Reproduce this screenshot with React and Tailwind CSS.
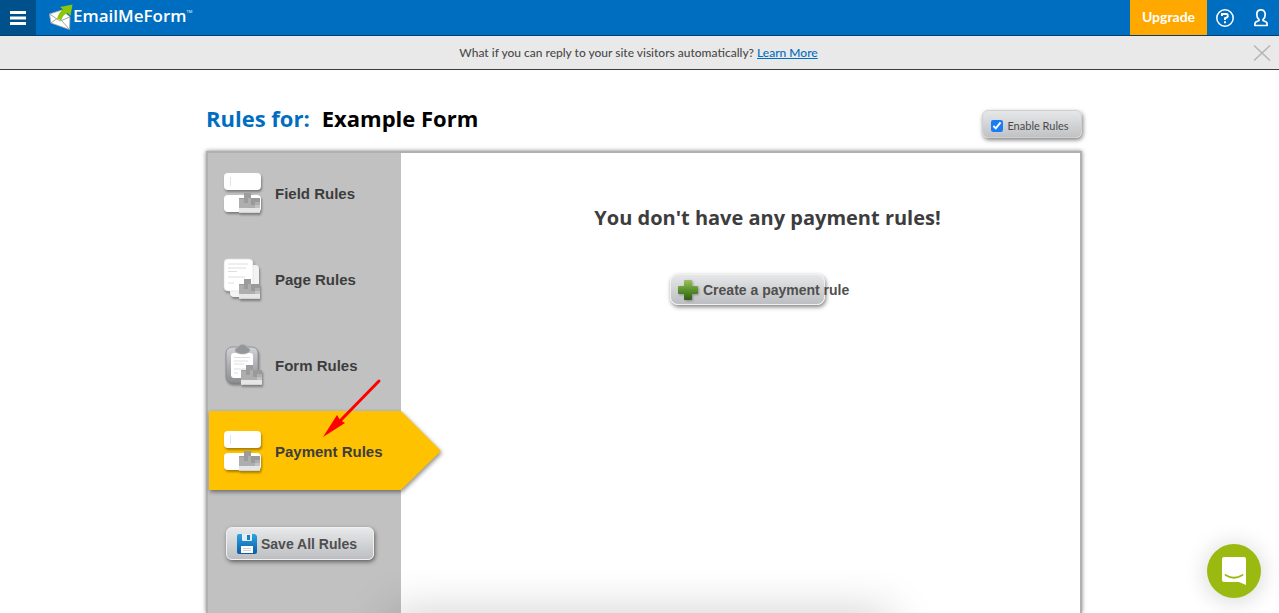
import { useState } from 'react';

const menuItems = [
  { id: 'field', label: 'Field Rules', icon: FieldIcon },
  { id: 'page', label: 'Page Rules', icon: PageIcon },
  { id: 'form', label: 'Form Rules', icon: FormIcon },
  { id: 'payment', label: 'Payment Rules', icon: FieldIcon },
];

// Little stepped block with a white tray, shared by all rule icons
function StepBadge() {
  return (
    <g>
      <path d="M17 28h5v-5h7v5h9v11H17z" fill="#aeaeae" />
      <path d="M22 23h7v5h-3v5h-4v-4h-5v-1h5z" fill="#9c9c9c" />
      <path d="M29 28h9v4h-5v3h-4z" fill="#9a9a9a" />
      <path d="M17 38h16v-3h5v8H17z" fill="#e6e6e6" />
      <path d="M33 35h5v3h-5z" fill="#c2c2c2" />
      <path d="M17 42h21v1H17z" fill="#d2d2d2" />
    </g>
  );
}

function FieldIcon() {
  return (
    <svg width="44" height="48" viewBox="0 0 44 48" className="drop-shadow-[1px_2px_1px_rgba(0,0,0,0.35)]">
      <rect x="2" y="3" width="37" height="17" rx="4" fill="#fff" />
      <path d="M8.500 7v9" stroke="#e4e4e4" />
      <rect x="2" y="25" width="37" height="17" rx="4" fill="#fff" />
      <StepBadge />
    </svg>
  );
}

function PageIcon() {
  return (
    <svg width="44" height="48" viewBox="0 0 44 48" className="drop-shadow-[1px_2px_1px_rgba(0,0,0,0.35)]">
      <rect x="8" y="9" width="29" height="32" rx="4" fill="#f3f3f3" />
      <rect x="2" y="3" width="29" height="32" rx="4" fill="#fff" stroke="#dcdcdc" strokeWidth="0.7" />
      <path d="M6 8h20M6 12h18M6 15.500h9M6 21h17M6 27h6" stroke="#dedede" />
      <StepBadge />
    </svg>
  );
}

function FormIcon() {
  return (
    <svg width="44" height="48" viewBox="0 0 44 48" className="drop-shadow-[1px_2px_1px_rgba(0,0,0,0.35)]">
      <defs>
        <linearGradient id="board" x1="0" y1="0" x2="0" y2="1">
          <stop offset="0" stopColor="#d2d3d5" />
          <stop offset="1" stopColor="#8b8d91" />
        </linearGradient>
      </defs>
      <rect x="4" y="5" width="32" height="36" rx="6" fill="url(#board)" stroke="#85878a" strokeWidth="0.8" />
      <rect x="9" y="11" width="22" height="25" rx="3" fill="#fff" />
      <path d="M12 15.500h16M12 19h14M12 22h10M12 27h12M12 31h4" stroke="#dedede" />
      <path d="M13 8c0-2 3-2 4-4s6-2 7 0 4 2 4 4-3 4-7.500 4S13 10 13 8z" fill="#94969a" stroke="#b4b6b9" strokeWidth="0.7" />
      <g transform="translate(2 0)">
        <StepBadge />
      </g>
    </svg>
  );
}

function PlusIcon() {
  return (
    <svg width="22" height="22" viewBox="0 0 22 22" className="shrink-0 drop-shadow-[1px_1px_1px_rgba(0,0,0,0.3)]">
      <defs>
        <linearGradient id="plus" x1="0" y1="0" x2="0" y2="1">
          <stop offset="0" stopColor="#9cc05f" />
          <stop offset="0.5" stopColor="#5a922c" />
          <stop offset="1" stopColor="#335c12" />
        </linearGradient>
      </defs>
      <path d="M8 1h6q1 0 1 1v5h5q1 0 1 1v6q0 1-1 1h-5v5q0 1-1 1H8q-1 0-1-1v-5H2q-1 0-1-1V8q0-1 1-1h5V2q0-1 1-1z" fill="url(#plus)" />
    </svg>
  );
}

function DiskIcon() {
  return (
    <svg width="20" height="20" viewBox="0 0 20 20" className="shrink-0">
      <defs>
        <linearGradient id="disk" x1="0" y1="0" x2="0" y2="1">
          <stop offset="0" stopColor="#2da4e0" />
          <stop offset="1" stopColor="#0a5ca8" />
        </linearGradient>
      </defs>
      <path d="M2 0h16l2 2v16q0 2-2 2H2q-2 0-2-2V2q0-2 2-2z" fill="url(#disk)" />
      <path d="M5 0h10v6q0 1-1 1H6q-1 0-1-1z" fill="#e6edf2" />
      <rect x="10" y="1" width="3" height="5" fill="#1780c4" />
      <rect x="4" y="12" width="12" height="7" fill="#fff" />
      <path d="M6 14.500h8M6 16.500h8" stroke="#d2d2d2" />
    </svg>
  );
}

function Logo() {
  return (
    <a href="#" className="ml-3 flex items-center pb-1 text-white" aria-label="EmailMeForm">
      <svg width="25" height="28" viewBox="0 0 25 28">
        <path d="M1.500 12L14 8l8 7-.500 12.500L3 21z" fill="#fff" stroke="#a9a9a9" strokeWidth="0.8" />
        <path d="M1.500 12L12 19 22 15M3 21l6-4.500M21.500 27.500L13.500 18.500" fill="none" stroke="#999" strokeWidth="0.900" />
        <path d="M9 18C9.500 13 12 9.500 15 7.500L12 5 24.500 2.500 22.500 14l-3-3c-4 2-5 3.500-6.500 8l-2-2z" fill="#8dc707" />
      </svg>
      <span className="font-['Open_Sans',sans-serif] text-[17px] font-semibold leading-6">EmailMeForm</span>
      <span className="mb-2 font-['Open_Sans',sans-serif] text-[4px] leading-none">TM</span>
    </a>
  );
}

function TopBar() {
  return (
    <header className="flex h-9 shrink-0 items-stretch border-b border-[#073d6b] bg-[#006ec0]">
      <button type="button" aria-label="Menu" className="flex w-9 items-center justify-center bg-[#00508c]">
        <svg width="16" height="14" viewBox="0 0 16 14">
          <path d="M0 1.500h16M0 7h16M0 12.500h16" stroke="#fff" strokeWidth="3" />
        </svg>
      </button>
      <Logo />
      <div className="ml-auto flex">
        <a href="#" className="flex w-[77px] items-center justify-center bg-[#ffa800] pb-0.5 font-['Lato',sans-serif] text-sm font-bold text-white">
          Upgrade
        </a>
        <button type="button" aria-label="Help" className="flex w-9 items-center justify-center">
          <svg width="18" height="18" viewBox="0 0 18 18" fill="none" stroke="#fff">
            <circle cx="9" cy="9" r="8.200" strokeWidth="1.500" />
            <path d="M6 7V5h4.500q1.200 0 1.200 1.100v1.400q0 .8-.8 1L9 9.200v1.900M9 12.200v2" strokeWidth="1.900" />
          </svg>
        </button>
        <button type="button" aria-label="Account" className="flex w-9 items-center justify-center">
          <svg width="14" height="18" viewBox="0 0 14 18" fill="none" stroke="#fff" strokeWidth="1.700">
            <path d="M5 10.500C3.500 9.500 2.800 7.500 2.800 5.500c0-3 1.700-4.700 4.200-4.700s4.200 1.700 4.200 4.700c0 2-.700 4-2.200 5v1l3.200 1.500c.8.500 1 2 1 3.500H.8c0-1.500.2-3 1-3.500L5 11.500z" strokeLinejoin="round" />
          </svg>
        </button>
      </div>
    </header>
  );
}

function Notice({ onClose }) {
  return (
    <div className="flex h-[34px] shrink-0 items-center border-b border-[#3f3b3e] bg-[#e9e9e9] pl-9 font-['Lato',sans-serif] text-xs font-medium text-[#4b4b4b]">
      <p className="flex-1 pr-9 text-center">
        What if you can reply to your site visitors automatically?{' '}
        <a href="#" className="text-[#006ec0] underline">Learn More</a>
      </p>
      <button type="button" aria-label="Close" onClick={onClose} className="mr-2 -ml-6">
        <svg width="18" height="16" viewBox="0 0 18 16">
          <path d="M1 .5l16 15M17 .5L1 15.500" stroke="#b5b5b5" strokeWidth="1.500" />
        </svg>
      </button>
    </div>
  );
}

function SideItem({ item, active, onSelect }) {
  const Icon = item.icon;
  return (
    <li className="relative flex h-[86px] items-center">
      {active && (
        <svg width="240" height="86" viewBox="0 0 240 86" className="absolute top-0 left-0 drop-shadow-[1px_2px_2px_rgba(0,0,0,0.45)]">
          <path d="M1 2h192l40 40-40 39H1z" fill="#ffc200" />
        </svg>
      )}
      <button type="button" onClick={() => onSelect(item.id)} className="relative flex h-20 w-full items-center gap-[9px] pl-3.5 text-[15px] font-bold text-[#3d3d3d]">
        <Icon />
        {item.label}
      </button>
    </li>
  );
}

export default function App() {
  const [active, setActive] = useState('payment');
  const [enabled, setEnabled] = useState(true);
  const [notice, setNotice] = useState(true);

  return (
    <div className="flex min-h-screen flex-col overflow-hidden bg-white font-['Liberation_Sans',Arial,sans-serif]">
      <TopBar />
      {notice && <Notice onClose={() => setNotice(false)} />}

      <main className="mx-auto flex w-full max-w-[885px] flex-1 flex-col pl-[9px]">
        <div className="flex h-[81px] items-end justify-between pb-[13px]">
          <h1 className="mb-0.5 flex gap-3 font-['Open_Sans',sans-serif] text-[22px] font-bold leading-9 text-black">
            <span className="text-[#006ec0]">Rules for:</span>
            <span>Example Form</span>
          </h1>
          <label className="flex h-7 w-[100px] items-center justify-center gap-1 rounded-md border border-[#cfd0d2] bg-linear-to-b from-[#e6e7e8] to-[#c0c2c4] pt-1 pr-1 font-['Lato',sans-serif] text-[11px] text-[#4b4b4b] shadow-[1px_2px_4px_rgba(0,0,0,0.5)]">
            <input type="checkbox" checked={enabled} onChange={(e) => setEnabled(e.target.checked)} className="size-3 accent-[#1a7cf5]" />
            Enable Rules
          </label>
        </div>

        <div className="flex flex-1 border-2 border-b-0 border-[#b0b0b0] shadow-[0_0_4px_rgba(0,0,0,0.5)]">
          <aside className="relative w-[193px] bg-[#c1c1c1]">
            <ul className="-mt-0.5">
              {menuItems.map((item) => (
                <SideItem key={item.id} item={item} active={active === item.id} onSelect={setActive} />
              ))}
            </ul>
            <button type="button" className="mt-8 ml-[18px] flex h-[33px] w-[148px] items-center gap-1 rounded-md border border-[#f0f0f0] bg-linear-to-b from-[#e8e9ea] to-[#bcbec1] pl-2.5 text-sm font-bold text-[#4f4f4f] shadow-[1px_2px_4px_rgba(0,0,0,0.5)]">
              <DiskIcon />
              Save All Rules
            </button>
            {/* Pointer to the selected section */}
            <svg width="60" height="62" viewBox="0 0 60 62" className="pointer-events-none absolute top-[225px] left-[114px]">
              <path d="M57 3L18 43" stroke="#f00" strokeWidth="3" strokeLinecap="round" />
              <path d="M1 59l14-22 3 5 5 3z" fill="#f00" />
            </svg>
          </aside>

          <section className="flex flex-1 flex-col items-center pt-[47px] pl-[54px]">
            <h2 className="w-full text-center font-['Open_Sans',sans-serif] text-xl font-bold leading-9 text-[#3d3d3d]">
              You don't have any payment rules!
            </h2>
            <button type="button" className="mt-[38px] mr-10 flex h-[31px] w-[155px] items-center gap-1 rounded-lg border border-[#f0f0f0] bg-linear-to-b from-[#e6e7e8] to-[#bcbec1] pl-1.5 text-sm font-bold whitespace-nowrap text-[#4f4f4f] shadow-[1px_2px_4px_rgba(0,0,0,0.5)]">
              <PlusIcon />
              Create a payment rule
            </button>
          </section>
        </div>
      </main>

      <div className="pointer-events-none fixed top-full left-1/2 h-16 w-[500px] -translate-x-1/2 shadow-[0_0_48px_rgba(0,0,0,0.2)]" />

      <button type="button" aria-label="Open chat" className="fixed right-[18px] bottom-[15px] flex size-[54px] items-center justify-center rounded-full bg-[#9aba12] shadow-[0_2px_24px_rgba(0,0,0,0.18)]">
        <svg width="26" height="28" viewBox="0 0 26 28">
          <path d="M3 0h20q2 0 2 2v26l-7-3H3q-2 0-2-2V2q0-2 2-2z" fill="#fff" />
          <path d="M4.500 18q8.500 5.500 17 0" fill="none" stroke="#9aba12" strokeWidth="1.800" strokeLinecap="round" />
        </svg>
      </button>
    </div>
  );
}
